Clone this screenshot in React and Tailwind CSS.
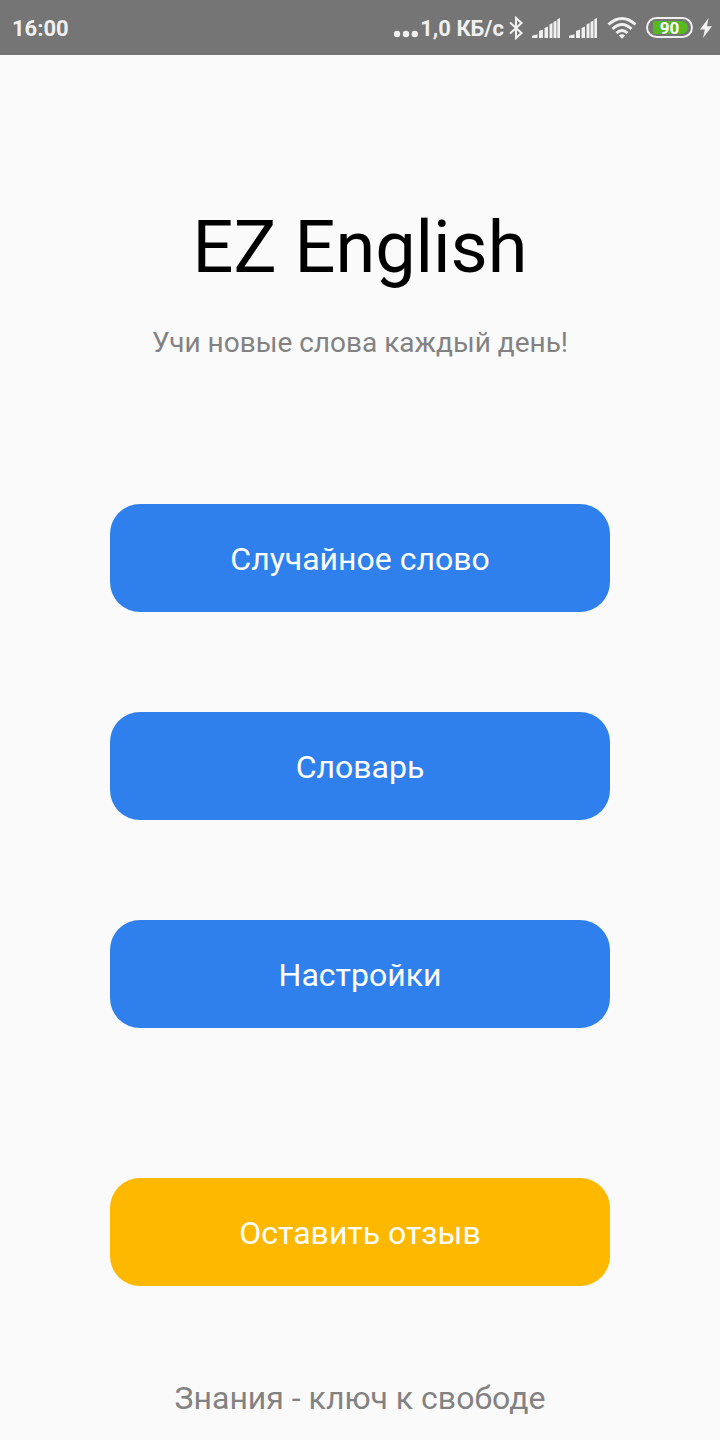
function BluetoothIcon() {
  return (
    <svg className="h-6 w-4" viewBox="0 0 16 24" fill="none" stroke="currentColor" strokeWidth="2.1" aria-hidden="true">
      <path d="M2 6.500 13.500 17 8 22V2l5.500 5L2 17.500" />
    </svg>
  );
}

function SignalIcon() {
  return (
    <svg className="h-5 w-7" viewBox="0 0 28 20" fill="currentColor" aria-hidden="true">
      <path d="M0 20v-2.300l5.500-1.400V20zM7 20v-7l4-1.500V20zM12.500 20v-10l3.500-1.500V20zM17.500 20V6.500L20.500 5v15zM21.500 20V4l3-1.500V20zM25.300 20V1.300L28 0v20z" />
    </svg>
  );
}

function WifiIcon() {
  return (
    <svg className="h-6 w-8" viewBox="0 0 32 24" fill="none" stroke="currentColor" aria-hidden="true">
      <path d="M2.500 8.500Q16-3.500 29.500 8.500" strokeWidth="3" />
      <path d="M6.500 13Q16 4 25.500 13" strokeWidth="3" />
      <path d="M10.500 17Q16 12 21.500 17" strokeWidth="3" />
      <path d="M12.800 19.500q3.200-2.500 6.400 0L16 22.800z" fill="currentColor" stroke="none" />
    </svg>
  );
}

function BoltIcon() {
  return (
    <svg className="h-5 w-3" viewBox="0 0 12 20" fill="currentColor" aria-hidden="true">
      <path d="M8.500 0 0 11.500h4.800L3 20 12 8.200H7z" />
    </svg>
  );
}

function StatusBar() {
  return (
    <header className="flex h-[55px] items-center justify-between bg-[#757575] pr-2 pl-3 text-[#f0f0f0]">
      <time className="pt-0.5 text-[22px] leading-7 font-bold">16:00</time>
      <div className="flex items-center">
        <svg className="mt-3 mr-0.5 h-2 w-6" viewBox="0 0 24 8" fill="currentColor" aria-hidden="true">
          <circle cx="3" cy="4" r="3.200" />
          <circle cx="12" cy="4" r="3.200" />
          <circle cx="20.800" cy="4" r="3.200" />
        </svg>
        <span className="mr-1 pt-0.5 text-[22px] leading-7 font-bold whitespace-nowrap">1,0 КБ/с</span>
        <BluetoothIcon />
        <span className="ml-2 flex gap-[9px]"><SignalIcon /><SignalIcon /></span>
        <span className="mr-2 ml-[9px]"><WifiIcon /></span>
        <div className="mr-[7px] flex h-[21px] w-[47px] items-center rounded-full border-2 border-[#f0f0f0] pr-[3px] pl-[5px]">
          <div className="flex h-[13px] w-full items-center justify-center rounded-l-xs rounded-r-lg bg-[#55b91f] pr-0.5 text-[17px] leading-4 font-bold text-white">
            90
          </div>
        </div>
        <BoltIcon />
      </div>
    </header>
  );
}

function MenuButton({ children, className = "bg-[#2f80ed]" }) {
  return (
    <button type="button" className={`flex h-[108px] w-full items-center justify-center rounded-[30px] pt-0.5 text-[32px] leading-10 text-white ${className}`}>
      {children}
    </button>
  );
}

export default function App() {
  return (
    <div className="flex min-h-screen flex-col bg-[#fafafa] font-['Roboto',sans-serif]">
      <StatusBar />
      <main className="flex flex-1 flex-col items-center pt-[151px] text-center">
        <h1 className="text-[72px] leading-[84px] text-black">EZ English</h1>
        <p className="mt-[37px] text-[28px] leading-8 text-[#828282]">Учи новые слова каждый день!</p>
        <nav className="mt-[145px] flex w-full flex-col gap-[100px] px-[110px]">
          <MenuButton>Случайное слово</MenuButton>
          <MenuButton>Словарь</MenuButton>
          <MenuButton>Настройки</MenuButton>
        </nav>
        <div className="mt-[150px] w-full px-[110px]">
          <MenuButton className="bg-[#ffb800]">Оставить отзыв</MenuButton>
        </div>
      </main>
      <footer className="pt-[90px] pb-[22px] text-center text-[32px] leading-10 text-[#828282]">
        Знания - ключ к свободе
      </footer>
    </div>
  );
}
